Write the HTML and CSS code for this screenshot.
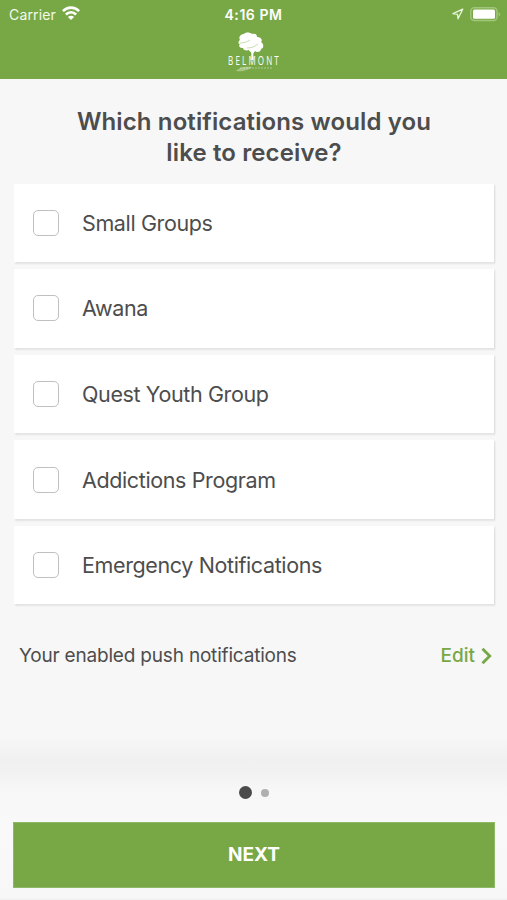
FILE: index.html
```html
<!DOCTYPE html>
<html lang="en">
<head>
<meta charset="utf-8">
<title>Notifications</title>
<link rel="stylesheet" href="styles.css">
</head>
<body>
<div class="screen">
  <header class="header">
    <div class="status">
      <div class="status-left">
        <span class="carrier">Carrier</span>
        <svg class="wifi" width="18" height="14" viewBox="0 0 18 14" fill="none" stroke="#fff" stroke-width="2.6">
          <path d="M.9 5.100C5.500.5 12.500.5 17.100 5.100"/>
          <path d="M3.900 8.500c3-2.900 7.200-2.900 10.200 0"/>
          <path d="M9 14 5.900 10.900c1.700-1.700 4.500-1.700 6.200 0z" fill="#fff" stroke="none"/>
        </svg>
      </div>
      <span class="time">4:16 PM</span>
      <div class="status-right">
        <svg width="12" height="12" viewBox="0 0 12 12" fill="none" stroke="#e9f5dc" stroke-width="1.300" stroke-linejoin="round">
          <path d="M10.700 1.200 1 5.700l4.500.7.500 4.400z"/>
        </svg>
        <svg width="31" height="15" viewBox="0 0 31 15">
          <rect x=".8" y=".8" width="26.200" height="12.800" rx="3.500" fill="none" stroke="#a0c57b" stroke-width="1.500"/>
          <rect x="3" y="2.600" width="22" height="9.200" rx="1.500" fill="#fff"/>
          <path d="M28.700 5.200c1.900.6 1.900 3.400 0 4z" fill="#a6c883"/>
        </svg>
      </div>
    </div>
    <svg class="logo" width="64" height="44" viewBox="0 0 64 44" role="img" aria-label="Belmont">
      <g fill="#fff">
        <path d="M18 11c-2-3 1-6 4-6 1-2 6-2 8 0 4-1 5 1 5 3 4 0 6 3 4 5 3 2 3 6 0 7 0 3-4 4-6 2-2 2-6 1-6-1-3 1-6 0-6-2-3 0-5-2-3-4-2 0-2-3 0-4z"/>
        <path d="M28 20h1.300l.8 3 2.800-3 1 .6-2.600 4V31h-2v-7z"/>
        <path d="M14 42c3-4 10-5 16-4-3 3-10 5-16 4z" opacity=".35"/>
      </g>
      <path d="M18 14c4 0 7-1 10-3M25 19c4 0 7-1 11-4" stroke="#b8d49a" stroke-width=".8" fill="none"/>
      <path d="M18 39h32" stroke="#fff" stroke-width="1" stroke-dasharray="2 1" opacity=".4"/>
      <text x="9.500" y="36.500" transform="scale(.64 1)" class="logo-text">BELMONT</text>
    </svg>
  </header>

  <main class="content">
    <h1 class="title"><span class="line-one">Which notifications would you</span><br><span class="line-two">like to receive?</span></h1>
    <div class="list">
      <label class="card"><span class="box"></span><span class="name">Small Groups</span></label>
      <label class="card"><span class="box"></span><span class="name">Awana</span></label>
      <label class="card"><span class="box"></span><span class="name">Quest Youth Group</span></label>
      <label class="card"><span class="box"></span><span class="name">Addictions Program</span></label>
      <label class="card"><span class="box"></span><span class="name">Emergency Notifications</span></label>
    </div>
    <div class="enabled">
      <span class="enabled-text">Your enabled push notifications</span>
      <a class="edit"><span>Edit</span>
        <svg width="12" height="18" viewBox="0 0 12 18" fill="none" stroke="#78a845" stroke-width="2.900"><path d="m1.500 1.800 7.200 7.200-7.200 7.200"/></svg>
      </a>
    </div>
  </main>

  <footer class="footer">
    <div class="dots"><i class="dot active"></i><i class="dot"></i></div>
    <button class="next">NEXT</button>
  </footer>
</div>
</body>
</html>
```

FILE: styles.css
```css
* { box-sizing: border-box; }

body {
  margin: 0;
  font-family: Inter, "Liberation Sans", sans-serif;
  color: #4d4d4d;
}

.screen {
  display: flex;
  flex-direction: column;
  height: 900px;
  overflow: hidden;
  background: #f7f7f7;
}

.header {
  flex: none;
  height: 79px;
  background: #78a845;
  color: #fff;
}

.status {
  display: grid;
  grid-template-columns: 1fr auto 1fr;
  align-items: center;
  height: 28px;
  padding: 0 6px 0 9px;
}

.status-left, .status-right { display: flex; align-items: center; }
.status-left { gap: 6px; }
.status-right { justify-content: flex-end; gap: 6px; }
.carrier { font-size: 14px; letter-spacing: .15px; color: #f3faeb; }
.wifi { margin-top: -2px; }
.time { margin-right: 3px; font-size: 14px; font-weight: 600; letter-spacing: .55px; }

.logo { display: block; margin: 1px auto 0; }
.logo-text {
  font-family: "Open Sans", sans-serif;
  font-size: 12.500px;
  font-weight: 500;
  letter-spacing: 3.400px;
  fill: #fff;
}

.content {
  flex: none;
  height: 682px;
  padding: 28px 13px 0 14px;
  background: linear-gradient(#f7f7f7 658px, #f0f0f0 682px);
}

.title {
  margin: 0 0 15.500px;
  font-size: 24px;
  font-weight: 580;
  line-height: 30.500px;
  letter-spacing: .12px;
  text-align: center;
}

.list { display: flex; flex-direction: column; gap: 7px; }

.card {
  display: flex;
  align-items: center;
  gap: 23.500px;
  height: 78.600px;
  padding-left: 18.500px;
  background: #fff;
  box-shadow: 1px 1.500px 1.500px .5px rgba(0, 0, 0, .09);
}

.box {
  width: 26px;
  height: 26px;
  border: 1.500px solid #c0c0c0;
  border-radius: 5px;
}

.name { font-size: 21.500px; letter-spacing: -.38px; }

.enabled {
  display: flex;
  justify-content: space-between;
  align-items: center;
  margin-top: 37.500px;
  padding: 0 1px 0 5px;
  height: 28px;
}

.enabled-text { margin-top: -1px; font-size: 19px; letter-spacing: -.19px; }
.edit { display: flex; align-items: center; gap: 6px; font-size: 19px; font-weight: 500; color: #78a845; }

.footer {
  flex: 1;
  padding: 24px 12px 12px 13px;
  background: linear-gradient(#f0f0f0 0, #f1f1f1 10px, #f7f7f7 28px, #f9f9f9 64px, #f7f7f7 137px, #eee 139px);
}

.dots {
  display: flex;
  align-items: center;
  justify-content: center;
  gap: 9px;
  height: 15px;
}

.dot { width: 8px; height: 8px; border-radius: 50%; background: #b0b0b0; }
.dot.active { width: 13px; height: 13px; background: #4b4b4b; }

.next {
  display: block;
  width: 100%;
  height: 66px;
  margin-top: 22px;
  padding: 0 0 1px;
  border: 1px solid #8fb866;
  border-radius: 0;
  background: #78a845;
  color: #fff;
  font: 650 19px Inter, "Liberation Sans", sans-serif;
}
```
